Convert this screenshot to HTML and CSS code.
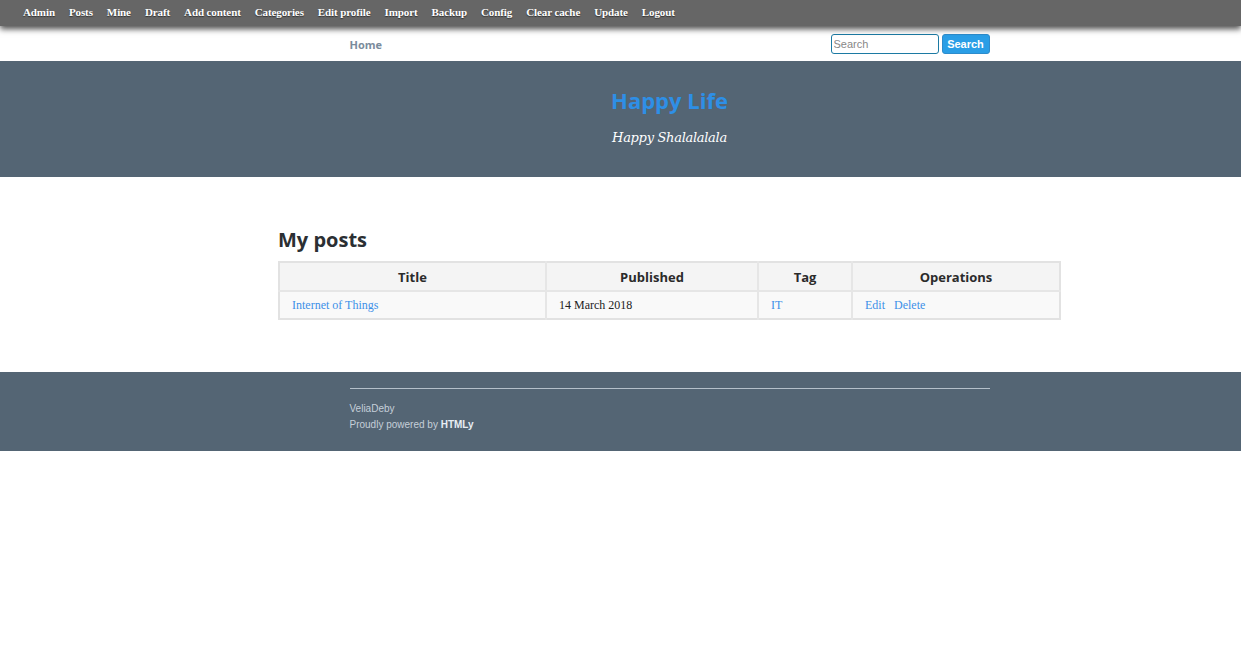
FILE: index.html
```html
<!DOCTYPE html>
<html>
<head>
<meta charset="utf-8">
<link rel="stylesheet" href="styles.css">
</head>
<body>
<div class="adminbar">
  <a>Admin</a><a>Posts</a><a>Mine</a><a>Draft</a><a>Add content</a><a>Categories</a><a>Edit profile</a><a>Import</a><a>Backup</a><a>Config</a><a>Clear cache</a><a>Update</a><a>Logout</a>
</div>
<div class="navbar">
  <div class="navinner">
    <a class="home">Home</a>
    <form class="search">
      <input class="search-input" placeholder="Search">
      <button class="search-btn" type="button">Search</button>
    </form>
  </div>
</div>
<header class="banner">
  <h1 class="site-title">Happy Life</h1>
  <p class="tagline">Happy Shalalalala</p>
</header>
<main class="content">
  <div class="content-inner">
    <h2 class="page-title">My posts</h2>
    <table class="posts">
      <thead>
        <tr><th class="c1">Title</th><th class="c2">Published</th><th class="c3">Tag</th><th class="c4">Operations</th></tr>
      </thead>
      <tbody>
        <tr>
          <td><a>Internet of Things</a></td>
          <td>14 March 2018</td>
          <td><a>IT</a></td>
          <td><a>Edit</a> <a class="del">Delete</a></td>
        </tr>
      </tbody>
    </table>
  </div>
</main>
<footer class="footer">
  <div class="footinner">
    <div class="line">VeliaDeby</div>
    <div class="line">Proudly powered by <b>HTMLy</b></div>
  </div>
</footer>
</body>
</html>
```

FILE: styles.css
```css
html, body { margin: 0; padding: 0; background: #fff; }
body { font-family: "Open Sans", sans-serif; }

.adminbar {
  height: 26px;
  background: #666;
  display: flex;
  align-items: center;
  padding-left: 23px;
  padding-bottom: 2px;
  box-sizing: border-box;
  box-shadow: 0 3px 6px rgba(0,0,0,0.7);
  position: relative;
  z-index: 2;
  font-family: "Liberation Serif", serif;
  font-weight: bold;
  font-size: 11px;
  letter-spacing: -0.1px;
}
.adminbar a { color: #fff; margin-right: 14px; text-shadow: 0 1px 1px #333; }

.navbar { height: 35px; background: #fff; padding-left: 98px; }
.navinner {
  width: 640px;
  margin: 0 auto;
  display: flex;
  align-items: center;
  justify-content: space-between;
  height: 35px;
}
.home { color: #7a8b9c; font-weight: bold; font-size: 11px; padding-top: 1px; }
.search { display: flex; align-items: center; gap: 3px; margin: 0; }
.search-input {
  width: 102px; height: 16px; padding: 1px 2px;
  border: 1px solid #1c7aa3; border-radius: 3px;
  font-family: "Liberation Sans", sans-serif; font-size: 11px; color: #333;
}
.search-input::placeholder { color: #888; }
.search-btn {
  width: 48px; height: 20px; padding: 0;
  background: #2a9ee6; color: #fff;
  border: 1px solid #2d8ccc; border-radius: 3px;
  font-family: "Liberation Sans", sans-serif; font-weight: bold; font-size: 11px;
}

.banner {
  background: #546574;
  height: 116px;
  text-align: center;
  padding-left: 98px;
  box-sizing: border-box;
  padding-top: 25px;
}
.site-title {
  margin: 0;
  color: #2e8fe6;
  font-weight: bold;
  font-size: 22px;
  line-height: 28px;
}
.tagline {
  margin: 16px 0 0;
  color: #fff;
  font-family: "DejaVu Serif", serif;
  font-style: italic;
  font-size: 13px;
  letter-spacing: -0.3px;
}

.content { padding: 50px 0 52px 98px; }
.content-inner { width: 783px; margin: 0 auto; }
.page-title { margin: 0 0 8px; font-size: 20px; color: #2b2f33; font-weight: bold; line-height: 26px; }
.posts {
  width: 783px;
  border-collapse: collapse;
  border: 2px solid #e2e2e2;
  font-size: 13px;
}
.posts th {
  background: #f4f4f4;
  color: #2b2b2b;
  font-weight: bold;
  height: 27px;
  padding: 0;
  border: 2px solid #e6e6e6;
  border-top: 0;
}
.posts td {
  background: #f9f9f9;
  height: 26px;
  padding: 0 12px;
  border: 2px solid #e6e6e6;
  border-top: 0; border-bottom: 0;
  font-family: "Liberation Serif", serif;
  font-size: 12px;
  color: #222;
}
.posts th:first-child, .posts td:first-child { border-left: 0; }
.posts th:last-child, .posts td:last-child { border-right: 0; }
.posts a { color: #3d90e8; }
.del { margin-left: 6px; }
.c1 { width: 265px; } .c2 { width: 210px; } .c3 { width: 92px; }

.footer { background: #546574; height: 79px; padding: 16px 0 0 98px; box-sizing: border-box; }
.footinner {
  width: 640px; margin: 0 auto;
  border-top: 1px solid #b5c0ca;
  padding-top: 12px;
  font-family: "Liberation Sans", sans-serif;
  font-size: 10px;
  color: #c5cfd9;
}
.footinner .line { line-height: 16px; }
.footinner b { color: #e8eef3; }
```
